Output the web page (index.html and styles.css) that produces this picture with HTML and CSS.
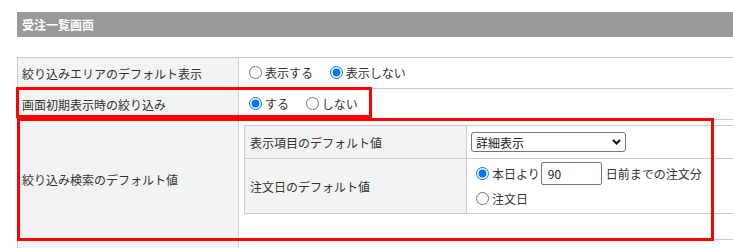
FILE: index.html
```html
<!DOCTYPE html>
<html lang="ja">
<head>
  <meta charset="UTF-8" />
  <title>受注一覧画面</title>
  <meta name="viewport" content="width=device-width, initial-scale=1" />
  <link rel="stylesheet" href="styles.css">
</head>
<body>

  <div class="page">
    <h3 class="section-title">受注一覧画面</h3>

    <table class="settings">
      <colgroup>
        <col class="col-label">
        <col>
      </colgroup>
      <tr class="row-short">
        <th>絞り込みエリアのデフォルト表示</th>
        <td>
          <label class="opt"><input type="radio" name="area"> 表示する</label>
          <label class="opt"><input type="radio" name="area" checked> 表示しない</label>
        </td>
      </tr>
      <tr class="row-short">
        <th>画面初期表示時の絞り込み</th>
        <td>
          <label class="opt"><input type="radio" name="initial" checked> する</label>
          <label class="opt"><input type="radio" name="initial"> しない</label>
        </td>
      </tr>
      <tr>
        <th>絞り込み検索のデフォルト値</th>
        <td class="nested-cell">
          <table class="nested">
            <colgroup>
              <col class="col-nested-label">
              <col>
            </colgroup>
            <tr class="row-select">
              <th>表示項目のデフォルト値</th>
              <td>
                <span class="select-wrap">
                  <select class="select">
                    <option>詳細表示</option>
                    <option>簡易表示</option>
                  </select>
                  <svg class="chevron" width="9" height="6" viewBox="0 0 9 6">
                    <path d="M1 1 L4.5 4.5 L8 1" fill="none" stroke="#111" stroke-width="2"/>
                  </svg>
                </span>
              </td>
            </tr>
            <tr class="row-date">
              <th>注文日のデフォルト値</th>
              <td>
                <div class="date-line">
                  <label class="opt tight"><input type="radio" name="date" checked> 本日より</label>
                  <input type="text" class="days" value="90">
                  <span>日前までの注文分</span>
                </div>
                <div class="date-line">
                  <label class="opt tight"><input type="radio" name="date"> 注文日</label>
                </div>
              </td>
            </tr>
          </table>
        </td>
      </tr>
      <tr class="row-short">
        <th></th>
        <td></td>
      </tr>
    </table>

    <div class="mark mark-initial"></div>
    <div class="mark mark-search"></div>
  </div>

</body>
</html>
```

FILE: styles.css
```css
html, body {
  margin: 0;
  overflow: hidden;
}

body {
  font-family: "Noto Sans CJK JP", "Noto Sans", sans-serif;
  font-size: 12px;
  color: #333;
  background: #fff;
}

.page {
  position: relative;
  width: 800px;
  padding: 12px 0 0 17px;
}

.section-title {
  margin: 0 0 20px;
  height: 25px;
  line-height: 25px;
  padding-left: 5px;
  background: #999;
  color: #fff;
  font-size: 12px;
  font-weight: bold;
}

.settings,
.nested {
  width: 100%;
  border-collapse: collapse;
  table-layout: fixed;
}

.settings th,
.settings td,
.nested th,
.nested td {
  border: 1px solid #ccc;
  text-align: left;
  font-weight: normal;
  vertical-align: middle;
}

.col-label {
  width: 221px;
}

.col-nested-label {
  width: 222px;
}

.settings th {
  background: #f2f3f3;
  padding: 0 4px;
}

.settings td {
  padding: 0 10px;
}

.row-short {
  height: 31px;
}

.settings td.nested-cell {
  padding: 5px 0 25px 5px;
}

.nested th {
  padding: 0 5px;
}

.nested td {
  padding: 0 4px;
}

.row-select {
  height: 33px;
}

.row-date {
  height: 55px;
}

.opt {
  display: inline-flex;
  align-items: center;
  margin-right: 14px;
}

.opt input {
  margin: 0 3px 0 0;
  width: 13px;
  height: 13px;
}

.opt.tight {
  margin-right: 1px;
}

.settings .nested td .opt input {
  margin-left: 5px;
}

.select-wrap {
  position: relative;
  display: inline-block;
  vertical-align: middle;
}

.select {
  appearance: none;
  -webkit-appearance: none;
  width: 155px;
  height: 20px;
  padding: 0 4px;
  border: 1px solid #767676;
  border-radius: 3px;
  background: #fff;
  color: #222;
  font-family: inherit;
  font-size: 12px;
  display: block;
}

.chevron {
  position: absolute;
  right: 5px;
  top: 7px;
  pointer-events: none;
}

.date-line {
  display: flex;
  align-items: center;
  height: 25px;
}

.days {
  width: 61px;
  height: 23px;
  box-sizing: border-box;
  padding: 0 6px;
  margin: 0 4px 0 0;
  border: 1px solid #767676;
  border-radius: 2px;
  font-family: inherit;
  font-size: 12px;
  color: #222;
}

.mark {
  position: absolute;
  border: 3px solid #f00;
  box-sizing: border-box;
  pointer-events: none;
}

.mark-initial {
  left: 16px;
  top: 87px;
  width: 356px;
  height: 31px;
}

.mark-search {
  left: 17px;
  top: 118px;
  width: 697px;
  height: 123px;
}
```
